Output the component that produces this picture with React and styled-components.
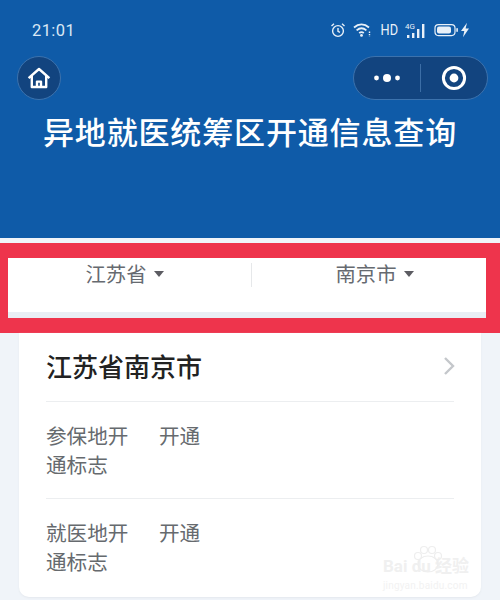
import React from "react";
import styled, { createGlobalStyle } from "styled-components";

const Global = createGlobalStyle`
  html, body { margin: 0; padding: 0; }
  body { width: 500px; height: 600px; overflow: hidden; background: #f0f4f9; font-family: "Roboto", "Noto Sans CJK SC", sans-serif; }
`;
const Page = styled.div`position: relative; width: 500px; height: 600px; overflow: hidden; background: #f0f4f9;`;
const Header = styled.header`height: 238px; background: #0f5ba8; display: flex; flex-direction: column; box-sizing: border-box; padding-top: 19px;`;
const StatusBar = styled.div`display: flex; align-items: center; justify-content: space-between; height: 22px; padding: 0 31px 0 32px; color: #dbe8f5;`;
const Time = styled.span`font-size: 16.5px; letter-spacing: .4px;`;
const StatusIcons = styled.div`display: flex; align-items: center; gap: 7px; color: #e8f0f8;`;
const Hd = styled.span`font-size: 15px; line-height: 1; transform: scaleX(.85); margin: 0 -2px 0 -1px;`;
const NavBar = styled.div`display: flex; align-items: center; justify-content: space-between; padding: 0 12px 0 17px; margin-top: 15px; height: 44px;`;
const HomeButton = styled.div`width: 44px; height: 44px; box-sizing: border-box; border-radius: 50%; background: #12447f; border: 1px solid #3c72ad; display: flex; align-items: center; justify-content: center;`;
const Capsule = styled.div`width: 135px; height: 44px; box-sizing: border-box; border-radius: 22px; background: #12447f; border: 1px solid #3c72ad; display: flex; align-items: center;`;
const CapsulePart = styled.div`flex: 1; height: 100%; display: flex; align-items: center; justify-content: center;`;
const Divider = styled.div`width: 1px; height: 28px; background: #3c6ea6;`;
const Title = styled.h1`margin: 12px 0 0; text-align: center; color: #fff; font-size: 31px; line-height: 44px; font-weight: 500; letter-spacing: .85px;`;
const RedBand = styled.section`margin-top: 5px; height: 90px; box-sizing: border-box; background: #ee344c; padding: 15px 14px 15px 8px;`;
const Picker = styled.div`height: 60px; box-sizing: border-box; background: #fff; border-bottom: 6px solid #e9eef4; display: grid; grid-template-columns: 243px 1fr;`;
const PickerCell = styled.div`display: flex; justify-content: center; align-items: flex-start; padding: 2px ${(p) => p.$right}px 0 ${(p) => p.$left}px; gap: 7px; color: #666a70; font-size: 20.4px; line-height: 30px; position: relative;
  &::before { content: ""; display: ${(p) => (p.$divided ? "block" : "none")}; position: absolute; left: 0; top: 5px; height: 24px; width: 1px; background: #e6e8ea; }
`;
const Arrow = styled.i`width: 0; height: 0; border-left: 5.5px solid transparent; border-right: 5.5px solid transparent; border-top: 6px solid #5c5c62; margin-top: 11px;`;
const Card = styled.article`margin: 0 19px; height: 264px; background: #fff; border-radius: 0 0 10px 10px; box-sizing: border-box; padding: 0 27px; box-shadow: 0 1px 2px #e4e8ee;`;
const CardHead = styled.div`height: 69px; display: flex; align-items: center; justify-content: space-between; border-bottom: 1px solid #eceef0; color: #222; font-size: 26px; font-weight: 500; box-sizing: border-box; padding-bottom: 3px; & > svg { margin-right: -1px; }`;
const Row = styled.div`display: flex; height: 96px; box-sizing: border-box; padding-top: 21px; color: #666a6e; font-size: 20.6px; line-height: 29px; & + & { border-top: 1px solid #eceef0; height: 98px; }`;
const Label = styled.div`width: 85px; margin-right: 28px;`;
const Watermark = styled.div`position: absolute; left: 383px; top: 558px; width: 100px; color: #f0f0f0; font-size: 17px; line-height: 1; font-weight: 700; white-space: nowrap;`;
const WmSub = styled.div`font-size: 10px; font-weight: 400; margin-top: 6px; color: #f2f2f2; letter-spacing: .2px;`;
const Paw = styled.svg`position: absolute; left: 29px; top: -14px;`;

const Row_ = ({ a, b }) => (
  <Row>
    <Label>{a}</Label>
    <div>{b}</div>
  </Row>
);

export default function App() {
  return (
    <Page>
      <Global />
      <Header>
        <StatusBar>
          <Time>21:01</Time>
          <StatusIcons>
            <svg width="16" height="16" viewBox="0 0 16 16" fill="none" stroke="currentColor" strokeWidth="1.4"><circle cx="8" cy="9" r="5.4" /><path d="M8 6v3.3l2 1M1.5 4 4 1.8M14.5 4 12 1.8" /></svg>
            <svg width="20" height="16" viewBox="0 0 20 16" fill="none" stroke="currentColor" strokeWidth="1.8"><path d="M1 5.5c4.6-4 10.4-4 15 0M3.6 8.4c3-2.6 6.8-2.6 9.8 0M6.2 11c1.5-1.2 3.1-1.2 4.6 0" /><circle cx="8.5" cy="13.4" r="1.4" fill="currentColor" stroke="none" /><path d="M16.5 9.5v5" strokeWidth="1.4" strokeDasharray="1.4 1" /></svg>
            <Hd>HD</Hd>
            <svg width="22" height="17" viewBox="0 0 22 17" fill="currentColor"><text x="0" y="7" fontSize="8" fontFamily="Roboto">4G</text><rect x="2" y="13" width="2.4" height="3" /><rect x="7" y="11" width="2.4" height="5" /><rect x="12" y="7" width="2.4" height="9" /><rect x="17" y="2" width="2.4" height="14" /></svg>
            <svg width="35" height="16" viewBox="0 0 35 16" fill="currentColor"><rect x="1" y="2.6" width="20" height="11" rx="3.5" fill="none" stroke="currentColor" strokeWidth="1.2" /><rect x="3" y="4.6" width="14" height="7" rx="2" /><rect x="22.3" y="6" width="1.6" height="4" rx=".8" /><path d="M33 .8 27 9h3.3l-1.3 6.2L35 6.6h-3.4z" /></svg>
          </StatusIcons>
        </StatusBar>
        <NavBar>
          <HomeButton>
            <svg width="24" height="22" viewBox="0 0 24 22" fill="none" stroke="#fff" strokeWidth="2.4" strokeLinejoin="round"><path d="M1.6 11.2 12 2l10.4 9.2M4.8 9v11h14.4V9M10 20v-5.4h4V20" /></svg>
          </HomeButton>
          <Capsule>
            <CapsulePart>
              <svg width="28" height="10" viewBox="0 0 28 10" fill="#fff"><circle cx="3.5" cy="5" r="2.4" /><circle cx="14" cy="5" r="4" /><circle cx="24.5" cy="5" r="2.4" /></svg>
            </CapsulePart>
            <Divider />
            <CapsulePart>
              <svg width="26" height="26" viewBox="0 0 26 26" fill="none"><circle cx="13" cy="13" r="10.6" stroke="#fff" strokeWidth="3" /><circle cx="13" cy="13" r="4.4" fill="#fff" /></svg>
            </CapsulePart>
          </Capsule>
        </NavBar>
        <Title>异地就医统筹区开通信息查询</Title>
      </Header>
      <RedBand>
        <Picker>
          <PickerCell $left={0} $right={10}>江苏省<Arrow /></PickerCell>
          <PickerCell $divided $left={12} $right={0}>南京市<Arrow /></PickerCell>
        </Picker>
      </RedBand>
      <Card>
        <CardHead>
          江苏省南京市
          <svg width="12" height="20" viewBox="0 0 12 20" fill="none" stroke="#c4c7cb" strokeWidth="2.4"><path d="M2 2l8 8-8 8" /></svg>
        </CardHead>
        <Row_ a="参保地开通标志" b="开通" />
        <Row_ a="就医地开通标志" b="开通" />
      </Card>
      <Watermark>
        <Paw width="32" height="30" viewBox="0 0 32 30" fill="none" stroke="#eeeeee" strokeWidth="1.2"><ellipse cx="16" cy="20" rx="10" ry="8" /><circle cx="6" cy="12" r="3.5" /><circle cx="12" cy="6" r="3.5" /><circle cx="20" cy="6" r="3.5" /><circle cx="26" cy="12" r="3.5" /></Paw>
        Bai du 经验
        <WmSub>jingyan.baidu.com</WmSub>
      </Watermark>
    </Page>
  );
}
